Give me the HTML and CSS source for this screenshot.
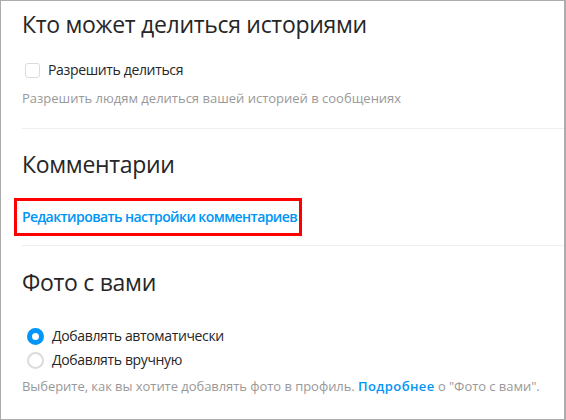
FILE: index.html
```html
<!DOCTYPE html>
<html lang="ru">
<head>
<meta charset="utf-8">
<link rel="stylesheet" href="styles.css">
</head>
<body>
<div class="frame">
  <section class="sec sec-1">
    <h2 class="title">Кто может делиться историями</h2>
    <label class="check">
      <span class="box"></span>
      <span class="label">Разрешить делиться</span>
    </label>
    <p class="hint">Разрешить людям делиться вашей историей в сообщениях</p>
  </section>
  <div class="rule"></div>
  <section class="sec sec-2">
    <h2 class="title">Комментарии</h2>
    <div class="mark">
      <a class="link" href="#">Редактировать настройки комментариев</a>
    </div>
  </section>
  <div class="rule"></div>
  <section class="sec sec-3">
    <h2 class="title">Фото с вами</h2>
    <div class="radios">
      <label class="radio">
        <span class="dot on"></span>
        <span class="label">Добавлять автоматически</span>
      </label>
      <label class="radio">
        <span class="dot"></span>
        <span class="label">Добавлять вручную</span>
      </label>
    </div>
    <p class="hint">Выберите, как вы хотите добавлять фото в профиль. <a class="more" href="#">Подробнее</a> о "Фото с вами".</p>
  </section>
</div>
</body>
</html>
```
FILE: styles.css
```css
* { box-sizing: border-box; }
html, body { margin: 0; padding: 0; background: #fff; }
body {
  font-family: "Open Sans", "Noto Sans", sans-serif;
  color: #262626;
}
.frame {
  width: 566px;
  height: 420px;
  border: 1px solid #acacac;
  border-right-width: 2px;
  overflow: hidden;
  padding-left: 21px;
}
.sec { display: flex; flex-direction: column; align-items: flex-start; }
.title {
  margin: 0;
  font-size: 23px;
  line-height: 30px;
  font-weight: 400;
  letter-spacing: -0.3px;
  color: #262626;
}
.sec-1 { padding-top: 8px; padding-bottom: 21px; }
.check { display: flex; align-items: center; gap: 8px; margin-top: 22px; padding-left: 3px; }
.box {
  width: 15px; height: 15px;
  border: 1px solid #dbdbdb;
  border-radius: 3px;
  background: #fff;
}
.label { font-size: 14px; line-height: 18px; letter-spacing: -0.35px; color: #262626; white-space: nowrap; }
.hint {
  margin: 10px 0 0;
  font-size: 13px;
  line-height: 18px;
  letter-spacing: 0;
  color: #999;
  white-space: nowrap;
}
.rule { height: 1px; background: #efefef; }
.sec-2 { padding-top: 20px; padding-bottom: 9px; }
.mark {
  margin-top: 19px;
  margin-left: -8px;
  width: 288px;
  height: 38px;
  border: 3px solid #ff0000;
  display: flex;
  align-items: center;
  padding-left: 5px;
}
.link {
  font-size: 14px;
  font-weight: 600;
  letter-spacing: -0.58px;
  color: #0095f6;
  text-decoration: none;
  line-height: 18px;
  white-space: nowrap;
}
.sec-3 { padding-top: 21px; }
.radios { display: flex; flex-direction: column; gap: 6px; margin-top: 30px; padding-left: 5px; }
.radio { display: flex; align-items: center; gap: 8px; }
.dot {
  width: 17px; height: 17px;
  border-radius: 50%;
  border: 2px solid #dbdbdb;
  background: #fff;
}
.dot.on { border: 5px solid #0095f6; }
.sec-3 .hint { margin-top: 8px; letter-spacing: -0.05px; }
.more { color: #0095f6; font-weight: 600; text-decoration: none; letter-spacing: 0.4px; }
```
